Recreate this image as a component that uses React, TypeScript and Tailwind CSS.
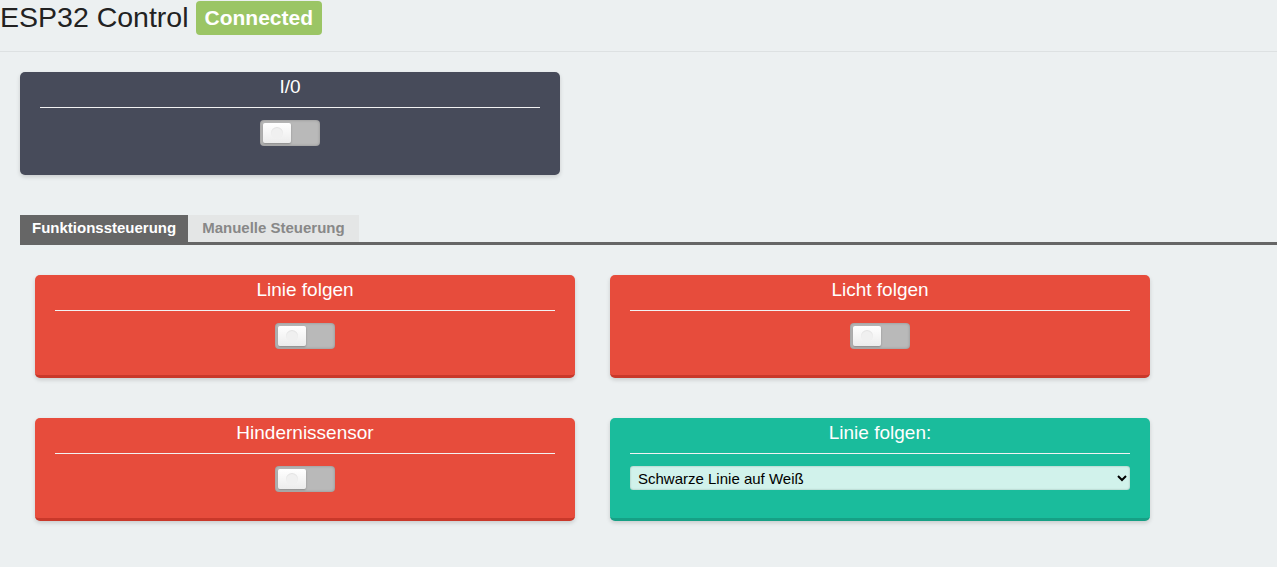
import { useState } from 'react';

function Toggle({ on, onClick }: { on: boolean; onClick: () => void }) {
  return (
    <button
      onClick={onClick}
      className="relative mx-auto block h-[26px] w-[60px] rounded-[4px] bg-[#b9b9b9] shadow-[inset_0_0_3px_rgba(0,0,0,0.25)]"
    >
      <span
        className={`absolute top-[3px] flex h-[20px] w-[28px] items-center justify-center rounded-[2px] bg-gradient-to-b from-white to-[#ececec] shadow-[0_1px_2px_rgba(0,0,0,0.25)] ${
          on ? 'left-[29px]' : 'left-[3px]'
        }`}
      >
        <span className="h-[12px] w-[12px] rounded-full bg-[#f0f0f0] shadow-[inset_0_1px_1px_rgba(0,0,0,0.06)]" />
      </span>
    </button>
  );
}

function Card({
  title,
  color,
  children,
}: {
  title: string;
  color: 'red' | 'green' | 'dark';
  children: React.ReactNode;
}) {
  const colors = {
    red: 'bg-[#e74c3c] border-b-[3px] border-[#c9382a] shadow-[0_2px_4px_rgba(0,0,0,0.15)]',
    green: 'bg-[#1abc9c] border-b-[3px] border-[#16a085] shadow-[0_2px_4px_rgba(0,0,0,0.15)]',
    dark: 'bg-[#474b5a] shadow-[0_2px_4px_rgba(0,0,0,0.15)]',
  };
  return (
    <div className={`h-[103px] w-[540px] rounded-[5px] px-5 pt-[4px] text-white ${colors[color]}`}>
      <div className="h-[31px] text-center text-[19px] leading-[22px]">{title}</div>
      <div className="border-t border-[#f2f2f2]" />
      <div className="pt-[12px]">{children}</div>
    </div>
  );
}

export default function App() {
  const [io, setIo] = useState(false);
  const [line, setLine] = useState(false);
  const [light, setLight] = useState(false);
  const [obstacle, setObstacle] = useState(false);
  const [tab, setTab] = useState(0);

  return (
    <div className="min-h-screen bg-[#ecf0f1] font-['Liberation_Sans',Arial,sans-serif]">
      <header className="flex h-[52px] items-start border-b border-[#dde1e2]">
        <h1 className="mt-[1px] text-[28.5px] leading-[32px] text-[#222]">ESP32 Control</h1>
        <span className="ml-[7px] mt-[1px] rounded-[4px] bg-[#9bc565] px-[9px] pt-[3px] pb-[4px] text-[21px] font-bold leading-[27px] text-white">
          Connected
        </span>
      </header>

      <div className="px-5 pt-5">
        <Card title="I/0" color="dark">
          <Toggle on={io} onClick={() => setIo(!io)} />
        </Card>
      </div>

      <div className="ml-5 mt-[40px] flex border-b-[3px] border-[#666]">
        <button
          onClick={() => setTab(0)}
          className={`h-[27px] px-[12px] text-[15px] font-bold ${tab === 0 ? 'bg-[#666] text-white' : 'bg-[#e4e6e6] text-[#888]'}`}
        >
          Funktionssteuerung
        </button>
        <button
          onClick={() => setTab(1)}
          className={`h-[27px] px-[14px] text-[15px] font-bold ${tab === 1 ? 'bg-[#666] text-white' : 'bg-[#e4e6e6] text-[#888]'}`}
        >
          Manuelle Steuerung
        </button>
      </div>

      <div className="grid grid-cols-[540px_540px] gap-x-[35px] gap-y-[40px] px-[35px] pt-[30px]">
        <Card title="Linie folgen" color="red">
          <Toggle on={line} onClick={() => setLine(!line)} />
        </Card>
        <Card title="Licht folgen" color="red">
          <Toggle on={light} onClick={() => setLight(!light)} />
        </Card>
        <Card title="Hindernissensor" color="red">
          <Toggle on={obstacle} onClick={() => setObstacle(!obstacle)} />
        </Card>
        <Card title="Linie folgen:" color="green">
          <select className="block h-[24px] w-full rounded-[3px] bg-[#d1f2eb] px-[4px] text-[15px] text-black shadow-[inset_0_0_2px_rgba(0,0,0,0.3)]">
            <option>Schwarze Linie auf Weiß</option>
            <option>Weiße Linie auf Schwarz</option>
          </select>
        </Card>
      </div>
    </div>
  );
}
